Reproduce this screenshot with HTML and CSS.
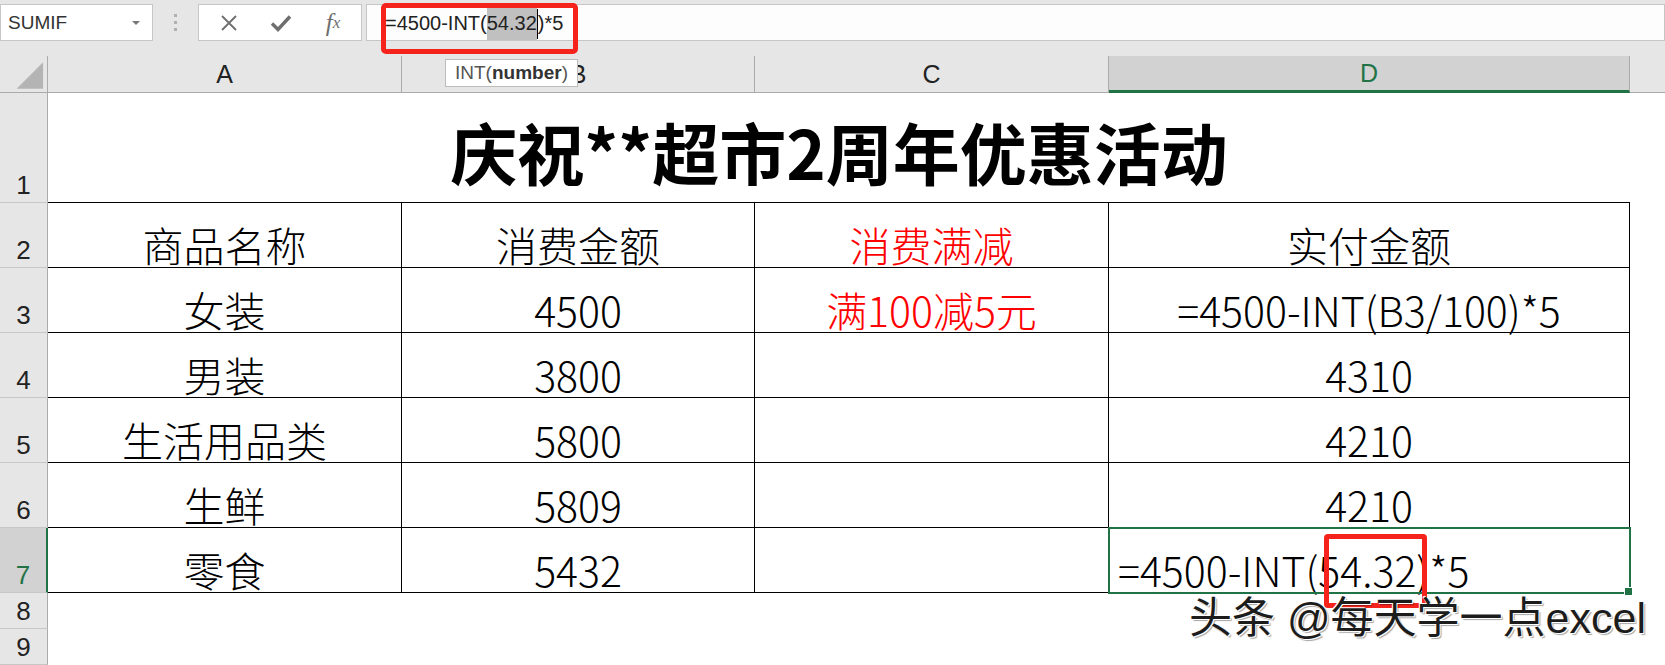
FILE: index.html
```html
<!DOCTYPE html>
<html lang="zh-CN">
<head>
    <meta charset="UTF-8">
    <title>庆祝**超市2周年优惠活动</title>
    <link rel="stylesheet" href="styles.css">
</head>
<body>
    <div class="topbar">
        <div class="namebox"><span>SUMIF</span><span class="caret"></span></div>
        <div class="grip"><i></i><i></i><i></i></div>
        <div class="btns">
            <span class="btn">
                <svg width="18" height="18" viewBox="0 0 18 18"><path d="M2 2L16 16M16 2L2 16" stroke="#6e6e6e" stroke-width="1.8" fill="none"/></svg>
            </span>
            <span class="btn">
                <svg width="22" height="18" viewBox="0 0 22 18"><path d="M2 9.5L8 15.5L20 2.5" stroke="#6e6e6e" stroke-width="3.4" fill="none"/></svg>
            </span>
            <span class="btn fx">f<sub>x</sub></span>
        </div>
        <div class="fbox">
            <span class="ftext">=4500-INT(<span class="hl">54.32</span><span class="cursor"></span>)*5</span>
        </div>
    </div>
    <div class="band"></div>

    <div class="sheet">
        <!-- column headers -->
        <div class="ch corner">
            <svg width="48" height="37" viewBox="0 0 48 37"><polygon points="44,6 44,33 17,33" fill="#b4b4b4"/></svg>
        </div>
        <div class="ch">A</div>
        <div class="ch">B</div>
        <div class="ch">C</div>
        <div class="ch sel">D</div>
        <div class="ch rest"></div>

        <!-- row 1 -->
        <div class="rh">1</div>
        <div class="title">庆祝**超市2周年优惠活动</div>
        <div class="e"></div>

        <!-- row 2 -->
        <div class="rh">2</div>
        <div class="c">商品名称</div>
        <div class="c">消费金额</div>
        <div class="c red">消费满减</div>
        <div class="c">实付金额</div>
        <div class="e"></div>

        <!-- row 3 -->
        <div class="rh">3</div>
        <div class="c">女装</div>
        <div class="c">4500</div>
        <div class="c red">满100减5元</div>
        <div class="c">=4500-INT(B3/100)*5</div>
        <div class="e"></div>

        <!-- row 4 -->
        <div class="rh">4</div>
        <div class="c">男装</div>
        <div class="c">3800</div>
        <div class="c"></div>
        <div class="c">4310</div>
        <div class="e"></div>

        <!-- row 5 -->
        <div class="rh">5</div>
        <div class="c">生活用品类</div>
        <div class="c">5800</div>
        <div class="c"></div>
        <div class="c">4210</div>
        <div class="e"></div>

        <!-- row 6 -->
        <div class="rh">6</div>
        <div class="c">生鲜</div>
        <div class="c">5809</div>
        <div class="c"></div>
        <div class="c">4210</div>
        <div class="e"></div>

        <!-- row 7 -->
        <div class="rh sel">7</div>
        <div class="c">零食</div>
        <div class="c">5432</div>
        <div class="c"></div>
        <div class="c active">=4500-INT(54.32)*5<span class="mark"></span></div>
        <div class="e"></div>

        <!-- rows 8, 9 -->
        <div class="rh">8</div>
        <div class="e wide"></div>
        <div class="rh">9</div>
        <div class="e wide"></div>
    </div>

    <!-- overlays -->
    <div class="fmark"></div>
    <div class="tip">INT(<b>number</b>)</div>
    <div class="watermark">头条 @每天学一点excel</div>
</body>
</html>
```

FILE: styles.css
```css
* {
    box-sizing: border-box;
}
body {
    margin: 0;
    width: 1665px;
    height: 665px;
    overflow: hidden;
    position: relative;
    background: #fff;
    font-family: "Liberation Sans", Arial, sans-serif;
}

/* formula bar */
.topbar {
    display: flex;
    height: 41px;
    padding-top: 4px;
    background: #e6e6e6;
}
.namebox {
    width: 153px;
    display: flex;
    align-items: center;
    justify-content: space-between;
    padding: 0 12px 0 7px;
    background: #fff;
    border: 1px solid #c6c6c6;
    font-size: 19px;
    color: #333;
}
.caret {
    width: 0;
    height: 0;
    border-left: 4px solid transparent;
    border-right: 4px solid transparent;
    border-top: 4px solid #777;
}
.grip {
    width: 45px;
    display: flex;
    flex-direction: column;
    align-items: center;
    justify-content: center;
    gap: 4px;
}
.grip i {
    width: 3px;
    height: 3px;
    background: #b0b0b0;
}
.btns {
    width: 164px;
    display: flex;
    align-items: center;
    padding-left: 4px;
    background: #fff;
    border: 1px solid #c6c6c6;
}
.btn {
    width: 52px;
    display: flex;
    justify-content: center;
    align-items: center;
}
.fx {
    font-family: "Liberation Serif", serif;
    font-style: italic;
    font-size: 25px;
    color: #6e6e6e;
}
.fx sub {
    font-size: 17px;
    vertical-align: -1px;
}
.fbox {
    flex: 1;
    margin-left: 4px;
    display: flex;
    align-items: center;
    padding-left: 18px;
    background: #fdfdfd;
    border: 1px solid #c6c6c6;
    font-size: 20px;
    color: #222;
}
.hl {
    display: inline-block;
    line-height: 34px;
    background: #c0c0c0;
}
.cursor {
    display: inline-block;
    width: 1px;
    height: 30px;
    background: #000;
    vertical-align: middle;
}
.band {
    height: 15px;
    background: #e6e6e6;
}

/* sheet grid */
.sheet {
    display: grid;
    grid-template-columns: 48px 354px 353px 354px 521px 1fr;
    grid-template-rows: 37px 110px repeat(6, 65px) 36px 36px;
}
.ch {
    display: flex;
    align-items: center;
    justify-content: center;
    background: #e6e6e6;
    border-right: 1px solid #ababab;
    border-bottom: 1px solid #ababab;
    font-size: 25px;
    color: #222;
}
.ch.sel {
    background: #d2d2d2;
    color: #217346;
    border-bottom: 3px solid #217346;
}
.ch.rest {
    border-right: none;
}
.rh {
    display: flex;
    align-items: flex-end;
    justify-content: center;
    padding-bottom: 4px;
    background: #e6e6e6;
    border-right: 1px solid #ababab;
    border-bottom: 1px solid #c6c6c6;
    font-size: 26px;
    line-height: 1;
    color: #222;
}
.rh.sel {
    background: #d2d2d2;
    color: #217346;
    border-right: 2px solid #217346;
}
.title {
    grid-column: span 4;
    display: flex;
    align-items: flex-end;
    justify-content: center;
    padding-bottom: 18px;
    border-bottom: 1px solid #000;
    font-family: "Noto Sans CJK SC", sans-serif;
    font-weight: bold;
    font-size: 67px;
    line-height: 1;
}
.c {
    display: flex;
    align-items: flex-end;
    justify-content: center;
    padding-bottom: 2px;
    border-right: 1px solid #000;
    border-bottom: 1px solid #000;
    font-family: "Noto Sans CJK SC", sans-serif;
    font-weight: 300;
    font-size: 41px;
    line-height: 1;
    color: #000;
    white-space: nowrap;
}
.c.red {
    color: #ff0000;
}
.c.active {
    position: relative;
    justify-content: flex-start;
    padding-left: 9px;
    outline: 2px solid #217346;
    outline-offset: -1px;
}
.c.active::after {
    content: "";
    position: absolute;
    right: -4px;
    bottom: -4px;
    width: 7px;
    height: 7px;
    background: #217346;
    border: 1px solid #fff;
}
.e.wide {
    grid-column: span 5;
}

/* annotations */
.mark {
    position: absolute;
    left: 215px;
    top: 6px;
    width: 103px;
    height: 74px;
    border: 5px solid #f5231b;
    border-radius: 4px;
}
.fmark {
    position: absolute;
    left: 381px;
    top: 3px;
    width: 197px;
    height: 51px;
    border: 5px solid #f5231b;
    border-radius: 5px;
}
.tip {
    position: absolute;
    left: 445px;
    top: 59px;
    width: 133px;
    height: 28px;
    display: flex;
    align-items: center;
    padding-left: 9px;
    background: #fff;
    border: 1px solid #bcbcbc;
    font-size: 19px;
    color: #555;
}
.tip b {
    color: #333;
}
.watermark {
    position: absolute;
    left: 1189px;
    top: 597px;
    font-family: "Liberation Sans", "Noto Sans CJK SC", sans-serif;
    font-size: 43px;
    line-height: 1;
    color: #1c1c1c;
    white-space: nowrap;
    text-shadow: 1px 1px 0 #fff, -1px -1px 0 #fff, 2px 2px 1px rgba(0, 0, 0, 0.35);
}
```
